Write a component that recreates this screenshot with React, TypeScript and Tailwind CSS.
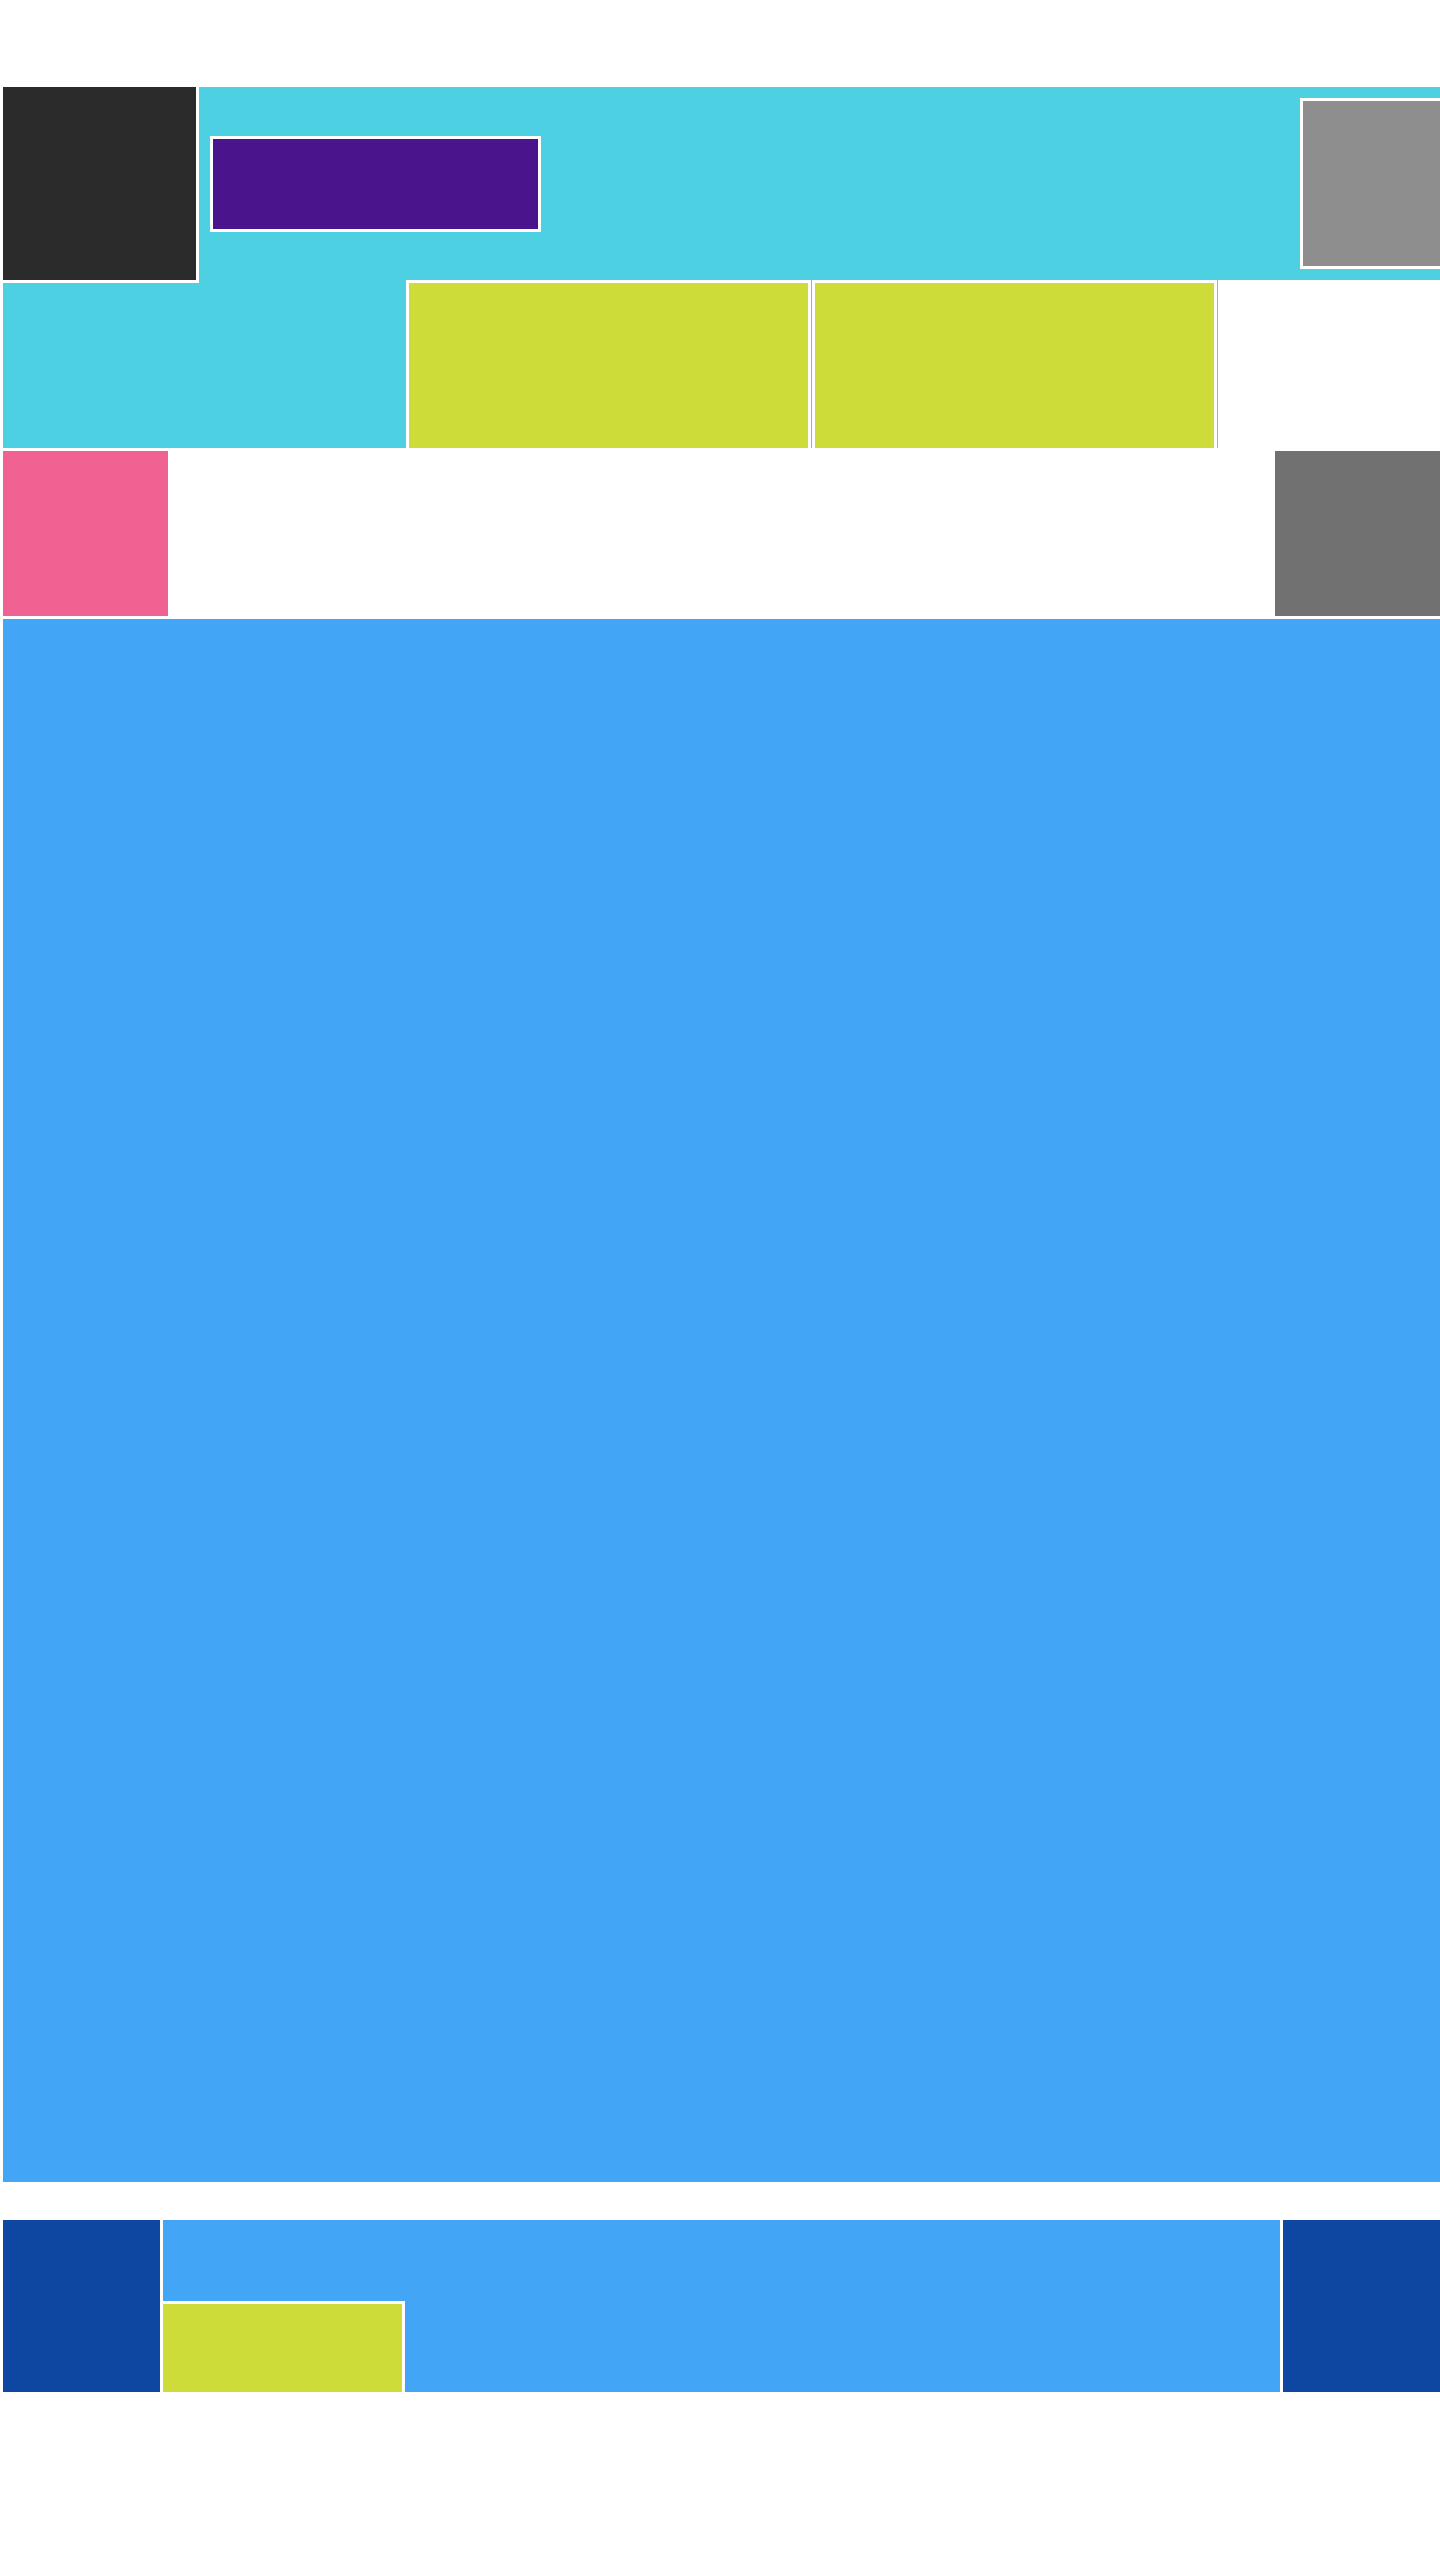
import React from "react";

export default function App() {
  return (
    <div className="min-h-[2560px] w-full overflow-hidden bg-white pt-[84px]">
      {/* Header row */}
      <div className="flex h-[196px]">
        <div className="relative z-10 h-[199px] w-[199px] shrink-0 border-[3px] border-white bg-[#2b2b2b]" />
        <div className="flex min-w-0 flex-1 items-center overflow-hidden border-t-[3px] border-white bg-[#4dd0e1] pl-[11px]">
          <div className="h-[96px] w-[331px] shrink-0 border-[3px] border-white bg-[#4a148c]" />
          <div className="ml-[759px] h-[171px] w-[160px] shrink-0 border-[3px] border-white bg-[#8e8e8e]" />
        </div>
      </div>

      {/* Second row */}
      <div className="flex h-[168px]">
        <div className="w-[406px] shrink-0 border-l-[3px] border-white bg-[#4dd0e1]" />
        <div className="w-[405px] shrink-0 border-x-[3px] border-t-[3px] border-white bg-[#cddc39]" />
        <div className="w-px shrink-0 bg-[#4dd0e1]" />
        <div className="w-[405px] shrink-0 border-x-[3px] border-t-[3px] border-white bg-[#cddc39]" />
        <div className="w-px shrink-0 bg-[#4dd0e1]" />
      </div>

      {/* Third row */}
      <div className="flex h-[171px] overflow-hidden">
        <div className="w-[171px] shrink-0 border-[3px] border-white bg-[#f06292]" />
        <div className="ml-[1101px] w-[200px] shrink-0 border-[3px] border-white bg-[#717171]" />
      </div>

      {/* Main block */}
      <div className="ml-[3px] h-[1563px] bg-[#42a5f5]" />

      {/* Footer row */}
      <div className="mt-[38px] flex h-[172px] gap-[3px] pl-[3px]">
        <div className="w-[157px] shrink-0 bg-[#0d47a1]" />
        <div className="flex flex-1 flex-col justify-end bg-[#42a5f5]">
          <div className="h-[91px] w-[242px] border-r-[3px] border-t-[3px] border-white bg-[#cddc39]" />
        </div>
        <div className="w-[157px] shrink-0 bg-[#0d47a1]" />
      </div>
    </div>
  );
}
